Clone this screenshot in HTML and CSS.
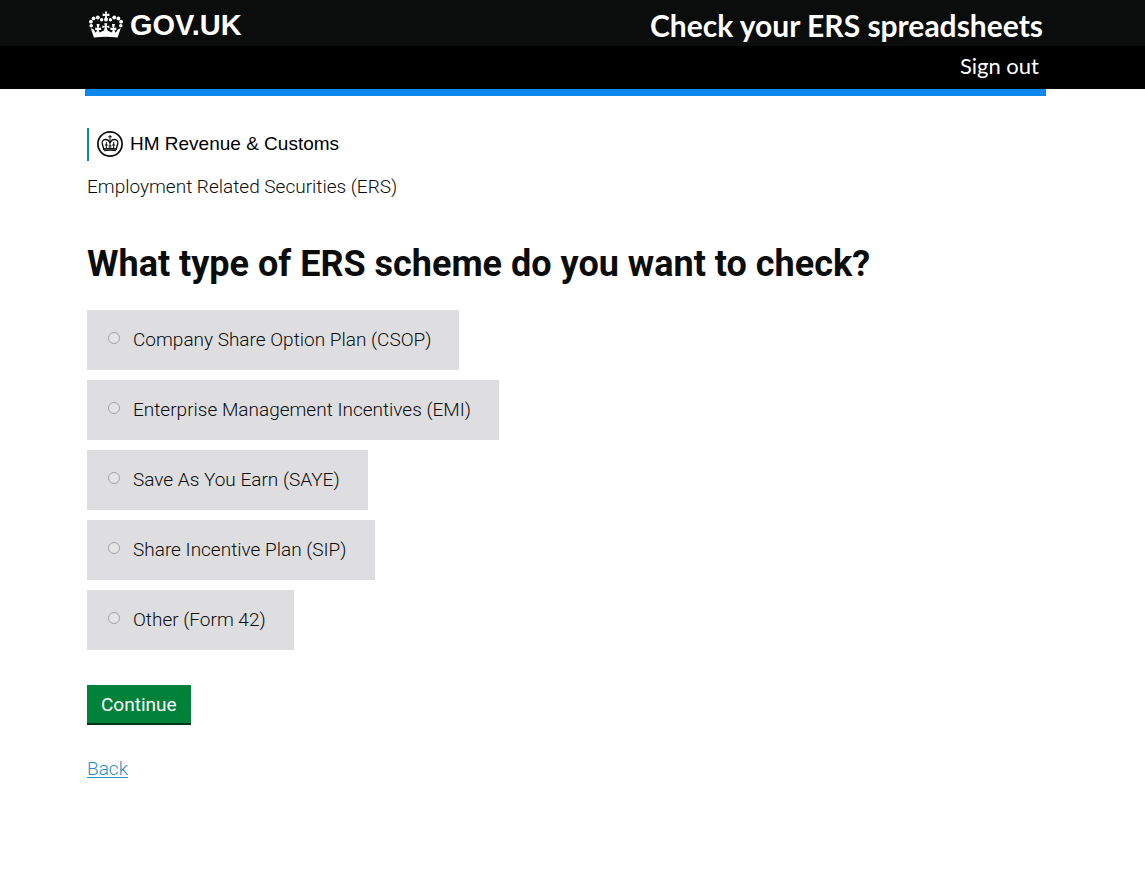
FILE: index.html
```html
<!DOCTYPE html>
<html lang="en">
<head>
<meta charset="utf-8">
<meta name="viewport" content="width=device-width, initial-scale=1">
<title>Check your ERS spreadsheets - GOV.UK</title>
<link rel="stylesheet" href="styles.css">
</head>
<body>
<header class="site-header">
  <div class="header-top">
    <a class="logo" href="#">
      <svg class="crown" viewBox="0 0 36 28" aria-hidden="true">
        <g fill="#fff">
          <path d="M16.800 0.500h2.400l-.5 2.500 2.700-.5v2.700l-2.700-.5.5 2.600h-2.400l.5-2.600-2.700.5V2.500l2.700.5z"/>
          <circle cx="18" cy="8.600" r="2"/>
          <circle cx="13.600" cy="8.800" r="1.700"/><circle cx="22.400" cy="8.800" r="1.700"/>
          <circle cx="9.800" cy="6.500" r="1.900"/><circle cx="26.200" cy="6.500" r="1.900"/>
          <circle cx="5.600" cy="7.400" r="1.900"/><circle cx="30.400" cy="7.400" r="1.900"/>
          <circle cx="2.900" cy="10.700" r="1.900"/><circle cx="33.100" cy="10.700" r="1.900"/>
          <circle cx="3.200" cy="14.700" r="1.800"/><circle cx="32.800" cy="14.700" r="1.800"/>
          <path d="M2.700 17l3 1.500 2 3.200 1.500-2.300-2-.3v-2.700l2.100.5-.7-3.800h3l-.8 3.800 2.300-.5v2.700l-2.300-.2.800 2.500 4.400-2 .8-3.100-2.500.8v-2.700l2.600.8-.7-3h3.200l-.8 3 2.700-.8v2.700l-2.700-.8.9 3.100 4.400 2 .8-2.500-2.300.2v-2.700l2.300.5-.8-3.800h3l-.7 3.800 2.100-.5v2.700l-2 .3 1.500 2.300 2-3.200 3-1.500-3.200 9.500Q18 24.900 5.900 26.500z"/>
        </g>
      </svg>
      <span>GOV.UK</span>
    </a>
    <span class="service-name">Check your ERS spreadsheets</span>
  </div>
  <nav class="header-nav"><a href="#">Sign out</a></nav>
</header>
<div class="accent"></div>
<main class="content">
  <div class="organisation">
    <svg class="crest" viewBox="0 0 26 26" aria-hidden="true">
      <circle cx="13" cy="13" r="12.100" fill="#fff" stroke="#0b0c0c" stroke-width="1.700"/>
      <g fill="none" stroke="#0b0c0c" stroke-width="1">
        <path d="M13 4v5M11.200 5.800h3.600M13 9v8"/>
        <path d="M12.800 12C11.500 7 4.600 7.500 5.200 12.500L7 19M13.200 12c1.300-5 8.200-4.500 7.600.5L19 19" stroke-width="1.300"/>
        <path d="M6.800 18q6.200-1 12.400 0M7.200 19.600q5.800-1 11.600 0" stroke-width="1.300"/>
        <path d="M9.300 11v6M7.800 14h3M16.700 11v6M15.200 14h3M11.500 15h3"/>
      </g>
    </svg>
    <span>HM Revenue &amp; Customs</span>
  </div>
  <p class="context">Employment Related Securities (ERS)</p>
  <h1 class="title" id="question">What type of ERS scheme do you want to check?</h1>
  <form class="scheme-form">
    <div class="choices" role="radiogroup" aria-labelledby="question">
      <label class="choice" for="csop"><input type="radio" id="csop" name="scheme"><span>Company Share Option Plan (CSOP)</span></label>
      <label class="choice" for="emi"><input type="radio" id="emi" name="scheme"><span>Enterprise Management Incentives (EMI)</span></label>
      <label class="choice" for="saye"><input type="radio" id="saye" name="scheme"><span>Save As You Earn (SAYE)</span></label>
      <label class="choice" for="sip"><input type="radio" id="sip" name="scheme"><span>Share Incentive Plan (SIP)</span></label>
      <label class="choice" for="other"><input type="radio" id="other" name="scheme"><span>Other (Form 42)</span></label>
    </div>
    <button class="continue" type="button">Continue</button>
  </form>
  <a class="back" href="#">Back</a>
</main>
</body>
</html>
```
FILE: styles.css
```css
* { box-sizing: border-box; }
body {
  margin: 0;
  background: #fff;
  color: #0b0c0c;
  font-family: Roboto, "Liberation Sans", sans-serif;
  font-size: 19px;
  font-weight: 300;
  line-height: 24px;
}
.site-header { background: #000; color: #fff; }
.header-top {
  display: flex;
  align-items: center;
  justify-content: space-between;
  min-height: 46px;
  padding: 5px 102px 1px 88px;
  background: #0b0c0c;
}
.logo {
  display: flex;
  align-items: center;
  gap: 6px;
  color: #fff;
  font: bold 29px/38px "Liberation Sans", sans-serif;
  text-decoration: none;
}
.crown { width: 36px; height: 28px; }
.service-name { font: bold 30px/36px Lato, sans-serif; }
.header-nav {
  display: flex;
  justify-content: flex-end;
  padding: 5px 106px 8px 88px;
}
.header-nav a {
  color: #fff;
  font: 22px/30px Lato, sans-serif;
  text-decoration: none;
}
.accent { height: 7px; margin: 0 99px 0 85px; background: #0b87ed; }
.content { padding: 32px 99px 32px 87px; }
.organisation {
  display: flex;
  align-items: center;
  gap: 7px;
  height: 33px;
  padding: 0 0 2px 8px;
  border-left: 2px solid #009390;
  color: #000;
  font-family: "Liberation Sans", sans-serif;
  font-weight: 400;
}
.crest { width: 26px; height: 26px; }
.context { margin: 14px 0 46px; }
.title { margin: 0 0 27px; font-size: 36px; line-height: 38px; }
.choices {
  display: flex;
  flex-direction: column;
  align-items: flex-start;
  gap: 10px;
}
.choice {
  display: flex;
  align-items: center;
  gap: 13px;
  min-height: 60px;
  padding: 0 28px 0 21px;
  background: #dedee1;
}
.choice input {
  appearance: none;
  flex: none;
  width: 12px;
  height: 12px;
  margin: 0 0 4px;
  border: 1px solid #a5a5a5;
  border-radius: 50%;
  background: #e4e4e4;
}
.choice input:checked { background: #0b0c0c; }
.continue {
  display: block;
  height: 40px;
  margin: 35px 0 32px;
  padding: 2px 14px 0;
  border: 0;
  border-bottom: 2px solid #003618;
  background: #00823b;
  color: #fff;
  font: inherit;
  font-weight: 400;
}
.back { color: #2b8cc4; text-underline-offset: 2px; }
```
